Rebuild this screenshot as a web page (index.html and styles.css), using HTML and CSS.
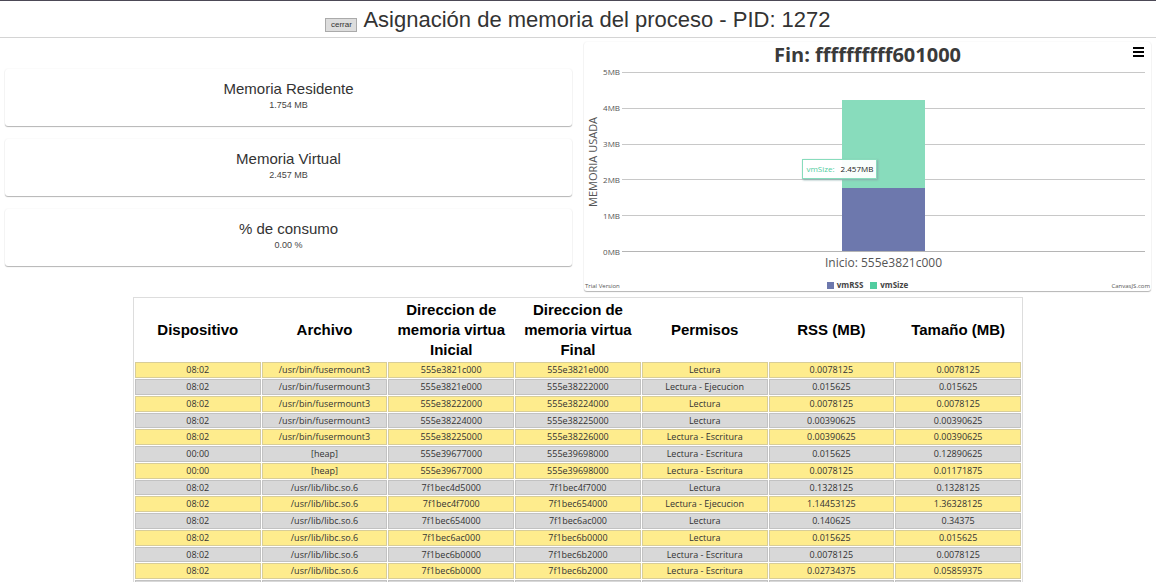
FILE: index.html
```html
<!DOCTYPE html>
<html lang="es">
<head>
<meta charset="utf-8">
<meta name="viewport" content="width=device-width, initial-scale=1">
<title>Asignación de memoria del proceso</title>
<link rel="stylesheet" href="styles.css">
</head>
<body>
<header class="topbar">
  <button class="close" type="button">cerrar</button>
  <h1 class="heading">Asignación de memoria del proceso - PID: 1272</h1>
</header>
<main>
  <div class="summary">
    <section class="stats">
      <article class="card stat"><h2 class="stat-name">Memoria Residente</h2><p class="stat-value">1.754 MB</p></article>
      <article class="card stat"><h2 class="stat-name">Memoria Virtual</h2><p class="stat-value">2.457 MB</p></article>
      <article class="card stat"><h2 class="stat-name">% de consumo</h2><p class="stat-value">0.00 %</p></article>
    </section>
    <section class="card chart">
      <div class="chart-head">
        <h2 class="chart-title">Fin: ffffffffff601000</h2>
        <button class="menu" type="button" aria-label="Opciones"><svg width="12" height="11" viewBox="0 0 12 11"><path d="M1 1h11M1 5h11M1 9h11" stroke="#000" stroke-width="2"/></svg></button>
      </div>
      <div class="chart-body">
        <div class="axis-title">MEMORIA USADA</div>
        <div class="ticks"><span>5MB</span><span>4MB</span><span>3MB</span><span>2MB</span><span>1MB</span><span>0MB</span></div>
        <div class="plot">
          <i></i><i></i><i></i><i></i><i></i>
          <div class="bar">
            <div class="seg size" style="height:49.1%"></div>
            <div class="seg rss" style="height:35.1%"></div>
            <div class="tip"><span class="tip-name">vmSize:</span><span>2.457MB</span></div>
          </div>
        </div>
        <div class="axis-label">Inicio: 555e3821c000</div>
      </div>
      <div class="chart-foot">
        <span>Trial Version</span>
        <div class="legend"><span class="key rss-key">vmRSS</span><span class="key size-key">vmSize</span></div>
        <a class="credit" href="#">CanvasJS.com</a>
      </div>
    </section>
  </div>
  <table class="maps">
    <thead><tr><th>Dispositivo</th><th>Archivo</th><th>Direccion de memoria virtua Inicial</th><th>Direccion de memoria virtua Final</th><th>Permisos</th><th>RSS (MB)</th><th>Tamaño (MB)</th></tr></thead>
    <tbody>
      <tr><td>08:02</td><td>/usr/bin/fusermount3</td><td>555e3821c000</td><td>555e3821e000</td><td>Lectura</td><td>0.0078125</td><td>0.0078125</td></tr>
      <tr><td>08:02</td><td>/usr/bin/fusermount3</td><td>555e3821e000</td><td>555e38222000</td><td>Lectura - Ejecucion</td><td>0.015625</td><td>0.015625</td></tr>
      <tr><td>08:02</td><td>/usr/bin/fusermount3</td><td>555e38222000</td><td>555e38224000</td><td>Lectura</td><td>0.0078125</td><td>0.0078125</td></tr>
      <tr><td>08:02</td><td>/usr/bin/fusermount3</td><td>555e38224000</td><td>555e38225000</td><td>Lectura</td><td>0.00390625</td><td>0.00390625</td></tr>
      <tr><td>08:02</td><td>/usr/bin/fusermount3</td><td>555e38225000</td><td>555e38226000</td><td>Lectura - Escritura</td><td>0.00390625</td><td>0.00390625</td></tr>
      <tr><td>00:00</td><td>[heap]</td><td>555e39677000</td><td>555e39698000</td><td>Lectura - Escritura</td><td>0.015625</td><td>0.12890625</td></tr>
      <tr><td>00:00</td><td>[heap]</td><td>555e39677000</td><td>555e39698000</td><td>Lectura - Escritura</td><td>0.0078125</td><td>0.01171875</td></tr>
      <tr><td>08:02</td><td>/usr/lib/libc.so.6</td><td>7f1bec4d5000</td><td>7f1bec4f7000</td><td>Lectura</td><td>0.1328125</td><td>0.1328125</td></tr>
      <tr><td>08:02</td><td>/usr/lib/libc.so.6</td><td>7f1bec4f7000</td><td>7f1bec654000</td><td>Lectura - Ejecucion</td><td>1.14453125</td><td>1.36328125</td></tr>
      <tr><td>08:02</td><td>/usr/lib/libc.so.6</td><td>7f1bec654000</td><td>7f1bec6ac000</td><td>Lectura</td><td>0.140625</td><td>0.34375</td></tr>
      <tr><td>08:02</td><td>/usr/lib/libc.so.6</td><td>7f1bec6ac000</td><td>7f1bec6b0000</td><td>Lectura</td><td>0.015625</td><td>0.015625</td></tr>
      <tr><td>08:02</td><td>/usr/lib/libc.so.6</td><td>7f1bec6b0000</td><td>7f1bec6b2000</td><td>Lectura - Escritura</td><td>0.0078125</td><td>0.0078125</td></tr>
      <tr><td>08:02</td><td>/usr/lib/libc.so.6</td><td>7f1bec6b0000</td><td>7f1bec6b2000</td><td>Lectura - Escritura</td><td>0.02734375</td><td>0.05859375</td></tr>
      <tr><td>&nbsp;</td><td></td><td></td><td></td><td></td><td></td><td></td></tr>
    </tbody>
  </table>
</main>
</body>
</html>
```
FILE: styles.css
```css
* { box-sizing: border-box; }
body {
  margin: 0;
  height: 100vh;
  overflow: hidden;
  background: #fff;
  color: #333;
  font-family: "Liberation Sans", Arial, sans-serif;
}
h1, h2, p { margin: 0; font-weight: 400; }
.topbar {
  display: flex;
  justify-content: center;
  align-items: baseline;
  gap: 6px;
  height: 38px;
  padding-top: 5px;
  border-top: 1px solid #4c4956;
  border-bottom: 1px solid #d4d4d4;
}
.heading { font-size: 22px; line-height: 28px; }
.close {
  width: 32px;
  height: 14px;
  padding: 0;
  border: 1px solid #aaa;
  background: #ddd;
  color: #333;
  font: 8px/12px "Liberation Sans", Arial, sans-serif;
}
.summary {
  display: grid;
  grid-template-columns: 1fr 1fr;
  gap: 12px;
  padding: 4px 5px 0;
}
.card {
  border-radius: 3px;
  background: #fff;
  box-shadow: 0 1px 1px #b4b4b4, 0 0 2px #eee;
}
.stats { display: flex; flex-direction: column; gap: 13px; padding-top: 27px; }
.stat { padding: 10px 0 15px; text-align: center; }
.stat-name { font-size: 15px; line-height: 20px; }
.stat-value { font-size: 9px; line-height: 12px; color: #444; }
.chart {
  padding-top: 1px;
  font-family: "Open Sans", "Noto Sans", sans-serif;
  color: #555;
}
.chart-head { position: relative; text-align: center; }
.chart-title { font-size: 20px; line-height: 24px; font-weight: 700; color: #3a3a3a; }
.menu {
  position: absolute;
  top: 4px;
  right: 7px;
  padding: 0;
  border: 0;
  background: none;
  line-height: 0;
}
.chart-body {
  display: grid;
  grid-template-columns: 17px 17px 1fr;
  grid-template-rows: 180px 22px;
  column-gap: 2px;
  padding: 5px 6px 0 0;
}
.axis-title {
  writing-mode: vertical-rl;
  transform: rotate(180deg);
  text-align: center;
  font-size: 11px;
  line-height: 17px;
}
.ticks {
  display: flex;
  flex-direction: column;
  justify-content: space-between;
  margin: -5px 0;
  text-align: right;
  font-size: 8px;
  line-height: 10px;
}
.plot {
  position: relative;
  display: grid;
  grid-template-rows: repeat(5, 1fr);
  border-bottom: 1px solid #b5b5b5;
}
.plot i { border-top: 1px solid #c8c8c8; }
.bar {
  position: absolute;
  inset: 0 0 0 42%;
  width: 16%;
  display: flex;
  flex-direction: column;
  justify-content: flex-end;
}
.size { background: #88dcbc; }
.rss { background: #6d78ad; }
.tip {
  position: absolute;
  right: 48px;
  top: 87px;
  display: flex;
  gap: 6px;
  padding: 2px 3px;
  border: 1px solid #88dcbc;
  background: rgba(255, 255, 255, 0.95);
  box-shadow: 1px 1px 2px #8aa;
  color: #222;
  font-size: 8px;
  line-height: 14px;
}
.tip-name { color: #51cda0; }
.axis-label { grid-column: 3; text-align: center; font-size: 12px; line-height: 22px; }
.chart-foot {
  display: grid;
  grid-template-columns: 1fr auto 1fr;
  align-items: end;
  padding: 5px 1px 0;
  font-size: 6px;
  line-height: 10px;
}
.credit { text-align: right; color: #555; text-decoration: none; }
.legend { display: flex; gap: 7px; font-size: 8px; line-height: 12px; font-weight: 700; color: #444; }
.key { display: flex; align-items: center; gap: 3px; }
.key::before { content: ""; width: 7px; height: 7px; }
.rss-key::before { background: #6d78ad; }
.size-key::before { background: #51cda0; }
.maps {
  width: 77%;
  margin: 6px auto 0;
  table-layout: fixed;
  border: 1px solid #ddd;
  border-collapse: separate;
  border-spacing: 1px;
  text-align: center;
}
.maps th { padding: 1px; color: #000; font-size: 15px; line-height: 20px; }
.maps td {
  padding: 0;
  border: 1px solid #c2c2c2;
  background: #d8d8d8;
  font-family: "Open Sans", "Noto Sans", sans-serif;
  font-size: 9px;
  line-height: 14px;
}
.maps tr:nth-child(odd) td { background: #feec8d; border-color: #d8cd98; }
.maps tr:nth-child(4n) td { line-height: 13px; }
```
